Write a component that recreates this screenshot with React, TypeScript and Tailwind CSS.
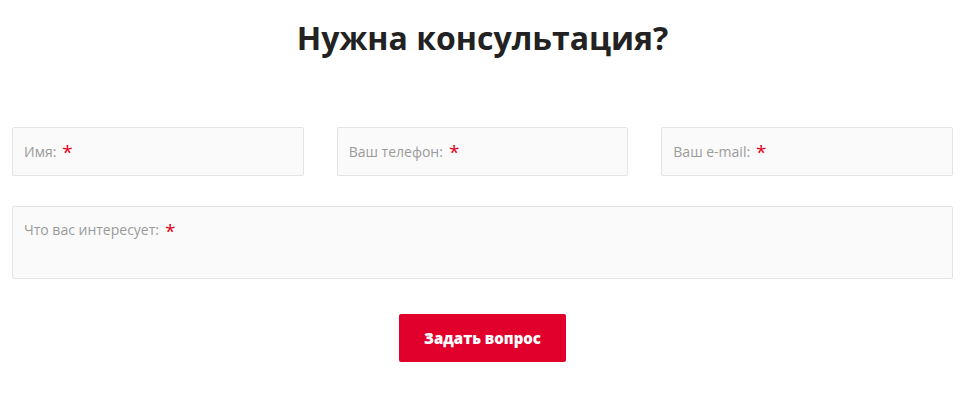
import React from "react";

function Field({ label }: { label: string }) {
  return (
    <div className="h-[49px] rounded-[2px] border border-[#e4e4e4] bg-[#fafafa] px-[11px] flex items-center">
      <span className="text-[14px] text-[#9a9a9a]">{label}</span>
      <span className="ml-[6px] text-[19px] leading-none text-[#e2001a] translate-y-[1px]">*</span>
    </div>
  );
}

export default function App() {
  return (
    <div className="w-[975px] h-[406px] bg-white font-['Open_Sans',sans-serif]">
      <h2 className="w-[965px] pt-[14px] text-center text-[32px] font-bold leading-[48px] text-[#222222]">
        Нужна консультация?
      </h2>
      <form className="mt-[65px] px-[12px] w-[965px]">
        <div className="grid grid-cols-3 gap-x-[33px]">
          <Field label="Имя:" />
          <Field label="Ваш телефон:" />
          <Field label="Ваш e-mail:" />
        </div>
        <div className="mt-[30px] h-[73px] rounded-[2px] border border-[#e4e4e4] bg-[#fafafa] px-[11px] pt-[12px] flex items-start">
          <span className="text-[14px] text-[#9a9a9a]">Что вас интересует:</span>
          <span className="ml-[6px] text-[19px] leading-[22px] text-[#e2001a] translate-y-[1px]">*</span>
        </div>
        <div className="mt-[35px] flex justify-center">
          <button
            type="button"
            className="h-[48px] w-[167px] rounded-[2px] bg-[#e0002b] text-[15px] font-extrabold text-white"
          >
            Задать вопрос
          </button>
        </div>
      </form>
    </div>
  );
}
